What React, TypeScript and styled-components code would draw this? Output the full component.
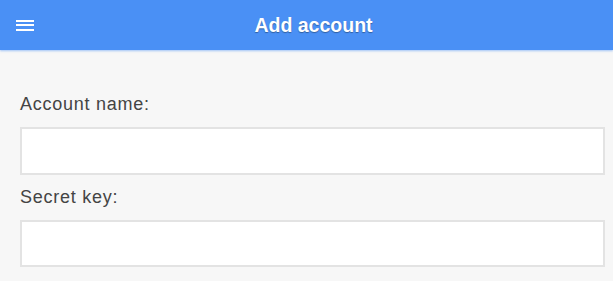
import { createGlobalStyle } from 'styled-components'
import styled from 'styled-components'

const GlobalStyle = createGlobalStyle`
  html, body {
    margin: 0;
    padding: 0;
    background: #f7f7f7;
    font-family: "Liberation Sans", Arial, sans-serif;
  }
`

const Page = styled.div`
  display: flex;
  flex-flow: column;
  width: 613px;
  height: 281px;
  overflow: hidden;
  background: #f7f7f7;
`

const Header = styled.header`
  display: flex;
  align-items: center;
  position: relative;
  height: 50px;
  flex-shrink: 0;
  background: #4a90f5;
  box-shadow: 0 1px 2px rgba(74, 144, 245, 0.5);
`

const MenuButton = styled.button`
  display: flex;
  flex-flow: column;
  justify-content: center;
  gap: 2.5px;
  width: 52px;
  height: 50px;
  padding: 0 0 0 16px;
  border: 0;
  background: none;
  cursor: pointer;

  span {
    display: block;
    width: 18px;
    height: 2px;
    background: #fff;
  }
`

const Title = styled.h1`
  flex: 1;
  margin: 0 38px 0 0;
  text-align: center;
  color: #fff;
  font-size: 19.5px;
  font-weight: bold;
  text-shadow: 0 1px 1px rgba(0, 0, 0, 0.35);
`

const Form = styled.form`
  display: flex;
  flex-flow: column;
  padding: 44px 8px 0 20px;
`

const Label = styled.label`
  display: block;
  color: #444;
  font-size: 18px;
  letter-spacing: 0.75px;
  line-height: 21px;
  margin-bottom: 12px;
`

const Input = styled.input<{ $last?: boolean }>`
  box-sizing: border-box;
  width: 100%;
  height: ${p => (p.$last ? 47 : 48)}px;
  margin: 0 0 ${p => (p.$last ? 0 : 12)}px;
  border: 2px solid #e3e3e3;
  background: #fff;
  font-size: 16px;
  font-family: inherit;
  padding: 0 10px;
  outline: none;
`

const App = () => {
  return (
    <Page>
      <GlobalStyle />
      <Header>
        <MenuButton type="button" aria-label="Menu">
          <span />
          <span />
          <span />
        </MenuButton>
        <Title>Add account</Title>
      </Header>

      <Form>
        <Label htmlFor="name">Account name:</Label>
        <Input id="name" type="text" />
        <Label htmlFor="secret">Secret key:</Label>
        <Input id="secret" type="text" $last />
      </Form>
    </Page>
  )
}

export default App
